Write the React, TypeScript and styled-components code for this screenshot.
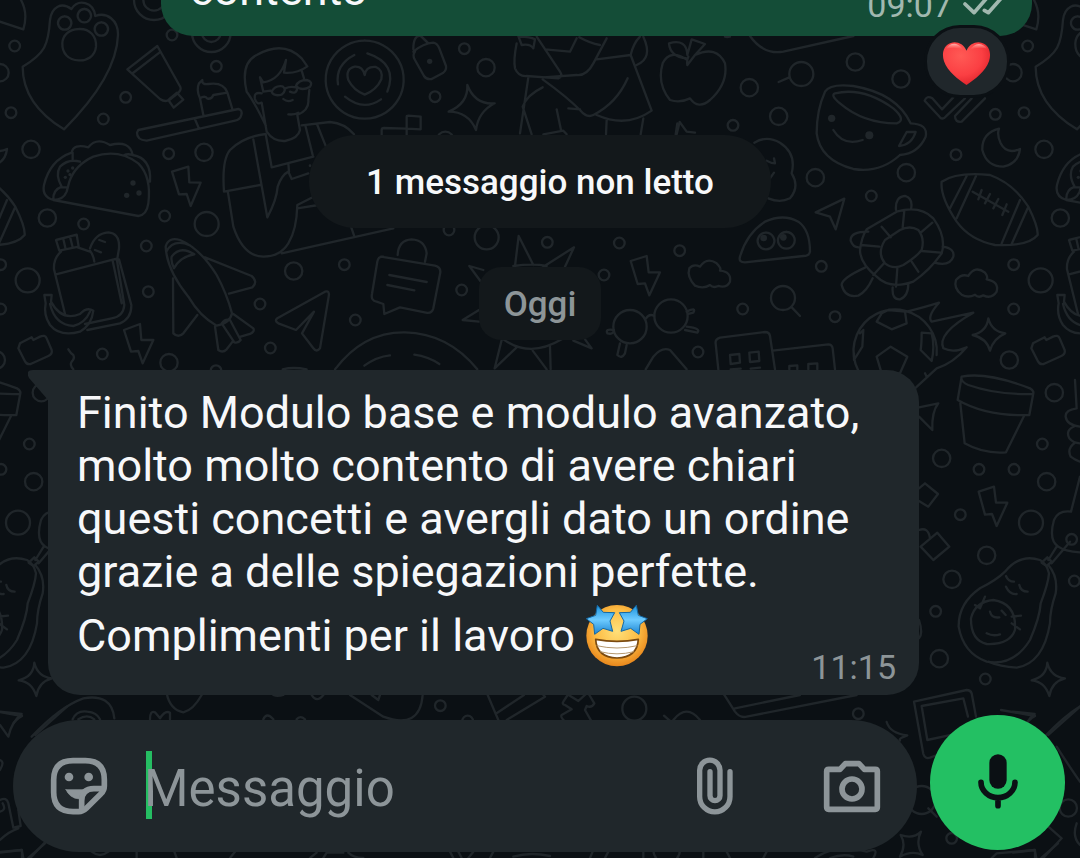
import React from 'react';
import styled, { createGlobalStyle } from 'styled-components';

const GlobalStyle = createGlobalStyle`
  *, *::before, *::after { box-sizing: border-box; }
  html, body, #root { height: 100%; }
  body {
    margin: 0;
    background: #0b1014;
    color: #f7f8fa;
    font-family: Roboto, 'Noto Sans', sans-serif;
    overflow: hidden;
  }
`;

const Screen = styled.main`
  position: relative;
  display: flex;
  flex-direction: column;
  height: 100vh;
  overflow: hidden;
`;

const Wallpaper = styled.svg`
  position: absolute;
  inset: 0;
  width: 100%;
  height: 100%;
  fill: none;
  stroke: #20262a;
  stroke-width: 7;
  stroke-linecap: round;
  stroke-linejoin: round;
`;

const Conversation = styled.section`
  position: relative;
  flex: 1;
  min-height: 0;
  display: flex;
  flex-direction: column;
  justify-content: flex-end;
  overflow: hidden;
  padding-bottom: 25px;
`;

const Bubble = styled.article<{ $own?: boolean }>`
  position: relative;
  flex: none;
  display: flex;
  flex-direction: column;
  margin: ${(p) => (p.$own ? '0 48px 0 161px' : '0 161px 0 48px')};
  padding: ${(p) => (p.$own ? '16px 28px 16px 29px' : '16px 23px 11px 29px')};
  border-radius: ${(p) => (p.$own ? '32px' : '0 32px 32px 32px')};
  background: ${(p) => (p.$own ? '#144d37' : '#20272b')};
`;

const Tail = styled.svg`
  position: absolute;
  top: 0;
  left: -20px;
  width: 20px;
  height: 32px;
  fill: #20272b;
`;

const Text = styled.p`
  margin: 0;
  font-size: 45px;
  line-height: 53px;
`;

const LastRow = styled.div`
  display: flex;
  justify-content: space-between;
  align-items: flex-end;
`;

const LastLine = styled(Text)<{ $own?: boolean }>`
  display: flex;
  align-items: center;
  gap: 10px;
  height: ${(p) => (p.$own ? '53px' : '74px')};
  margin-bottom: ${(p) => (p.$own ? '4px' : '12px')};
`;

const Time = styled.time<{ $own?: boolean }>`
  display: flex;
  align-items: center;
  gap: 11px;
  font-size: 34px;
  line-height: ${(p) => (p.$own ? '30px' : '34px')};
  color: ${(p) => (p.$own ? '#a1b8af' : '#8d9598')};
`;

const Ticks = styled.svg`
  width: 41px;
  height: 24px;
  fill: none;
  stroke: #a1b8af;
  stroke-width: 11;
  stroke-linecap: round;
  stroke-linejoin: round;
`;

const Emoji = styled.svg<{ $w: number; $h: number }>`
  flex: none;
  width: ${(p) => p.$w}px;
  height: ${(p) => p.$h}px;
`;

const Reaction = styled.button`
  position: absolute;
  right: 22px;
  bottom: -62px;
  display: flex;
  align-items: center;
  justify-content: center;
  width: 86px;
  height: 73px;
  padding: 4px 2px 0 0;
  border: 3px solid #0b1014;
  border-radius: 36px;
  background: #20272b;
`;

const UnreadChip = styled.h2`
  align-self: center;
  flex: none;
  margin: 99px 0 0;
  padding: 3px 57px 0;
  border-radius: 47px;
  background: #13181b;
  font-size: 35px;
  font-weight: 500;
  line-height: 90px;
`;

const DayChip = styled.h3`
  align-self: center;
  flex: none;
  margin: 39px 0 30px;
  padding: 3px 25px 0;
  border-radius: 22px;
  background: #13181b;
  color: #8d9598;
  font-size: 35px;
  font-weight: 500;
  line-height: 70px;
`;

const Footer = styled.form`
  position: relative;
  flex: none;
  display: flex;
  align-items: flex-start;
  gap: 13px;
  padding: 0 15px 6px 13px;
  margin-top: -5px;
`;

const Composer = styled.div`
  flex: 1;
  min-width: 0;
  display: flex;
  align-items: center;
  height: 132px;
  margin-top: 5px;
  padding: 0 36px 0 37px;
  border-radius: 66px;
  background: #20272b;
`;

const IconButton = styled.button`
  flex: none;
  width: 58px;
  height: 58px;
  padding: 0;
  border: 0;
  background: none;
  color: #8d9599;
  & + & { margin-left: 79px; }
`;

const Icon = styled.svg`
  display: block;
  width: 58px;
  height: 58px;
  fill: none;
  stroke: currentColor;
  stroke-linecap: round;
  stroke-linejoin: round;
`;

const Field = styled.label`
  position: relative;
  flex: 1;
  min-width: 0;
  display: flex;
  align-items: center;
  margin: 0 19px 2px 38px;
  height: 68px;
  border-left: 6px solid #25bd62;
`;

const Input = styled.input`
  position: relative;
  width: 100%;
  height: 68px;
  margin-left: -8px;
  padding: 6px 0 0;
  border: 0;
  outline: 0;
  background: none;
  color: #f7f8fa;
  font: 400 51px/62px Roboto, 'Noto Sans', sans-serif;
  &::placeholder { color: #8d9599; opacity: 1; }
`;

const MicButton = styled.button`
  flex: none;
  display: flex;
  align-items: center;
  justify-content: center;
  width: 135px;
  height: 135px;
  padding: 0;
  border: 0;
  border-radius: 50%;
  background: #23c063;
  color: #0b1014;
`;

const TILE = 3039;

/* Ring positions of the doodle tile: x, y, radius, in thirds of a pixel. */
const rings: Array<[number, number, number]> = [
  [44, 138, 16], [0, 218, 26], [33, 338, 16], [93, 448, 26], [377, 292, 16], [310, 357, 16],
  [516, 105, 16], [649, 199, 16], [506, 461, 16], [612, 457, 26], [142, 654, 26], [251, 672, 16],
  [494, 648, 16], [620, 672, 36], [439, 738, 16], [83, 841, 36], [445, 875, 16], [881, 813, 26],
  [1033, 794, 16], [780, 912, 16], [1066, 960, 16], [811, 1044, 16], [307, 1062, 16], [507, 1088, 26],
  [2, 794, 16], [2, 927, 16], [462, 0, 60], [462, 0, 32], [634, 98, 58], [634, 98, 28], [648, 1112, 16],
  [1393, 146, 16], [1458, 203, 26], [1305, 290, 16], [1347, 690, 16], [1460, 712, 36], [1642, 727, 16],
  [1858, 729, 16], [1812, 825, 16], [1385, 870, 16], [1336, 421, 26], [1890, 980, 50], [2013, 948, 50],
  [2039, 752, 16], [2248, 263, 26], [2336, 349, 26], [2404, 222, 36], [2566, 186, 26], [2703, 237, 26],
  [2199, 376, 16], [2446, 533, 26], [2719, 518, 26], [2614, 588, 16], [2868, 464, 16], [2986, 343, 16],
  [2464, 799, 16], [2228, 927, 16], [2505, 950, 16], [2349, 894, 36], [2094, 1056, 16],
  [3028, 1080, 26],
  [2825, 1375, 26], [3163, 1178, 26], [2937, 1408, 16], [3042, 1408, 16], [3127, 1332, 16], [3140, 1445, 26],
  [2881, 1544, 16], [3093, 1568, 36], [2960, 1666, 26], [2856, 1738, 26], [3223, 1743, 16],
  [2807, 1834, 16], [2818, 1976, 26], [2956, 2037, 16], [2575, 2141, 16], [2855, 2515, 16], [3205, 2424, 26],
  [2765, 2400, 42], [2000, 2550, 40], [3215, 1618, 16],
  [1321, 2117, 16], [1403, 2163, 16], [1903, 2126, 36],
];

const strokes = [
  /* paw */
  'M68 200 C135 160 145 135 150 60 C155 20 185 5 214 27 C235 -5 280 5 286 48 C320 35 355 60 354 105 C350 220 250 330 192 388 C130 350 68 290 68 200Z',
  'M236 87 C270 85 290 110 288 140 C285 170 260 183 236 181 C205 180 186 160 187 130 C188 105 208 88 236 87Z',
  'M194 49a20 20 0 1 0 .1 0M253 27a20 20 0 1 0 .1 0M304 67a20 20 0 1 0 .1 0',
  'M63 0 Q85 40 70 88 L0 65',
  /* paint tube */
  'M382 208 L472 138 L541 261 Q545 270 533 280 L508 300 Q495 307 480 297Z M399 219 L482 155 M505 300 L531 278 L550 299 L521 323Z',
  /* cake on tray */
  'M415 390 L715 327 Q728 330 724 345 Q720 360 705 362 L440 422 Q410 420 411 398Z M585 358 L597 386 M610 345 L600 295 Q588 270 597 250 L607 240 Q605 255 625 252 Q670 245 682 277 L697 327 M600 295 Q615 285 622 296 Q635 298 640 285 L682 278',
  /* man */
  'M798 378 Q760 300 740 275 Q720 190 770 165 Q850 120 905 175 L922 199 Q890 222 852 218 L858 180 Q840 240 790 247 L780 232 L790 275 M785 280 Q760 275 765 297 Q770 315 785 308 L800 395 Q820 425 855 423 Q895 415 900 390 L892 345 Q928 330 925 300 L928 270 M865 343 Q885 345 895 338 M850 297 Q862 308 878 300 M815 275 Q825 255 848 259 Q862 270 845 284 Q820 290 815 275Z M888 258 Q895 240 920 240 Q940 245 930 260 Q905 275 888 258Z M856 265 Q870 258 888 262 M790 275 L812 272 M870 275 Q890 285 892 262 M905 212 L912 235',
  'M797 402 Q730 410 690 450 Q665 480 672 575 L780 555 M684 578 L700 680 Q730 770 790 770 Q840 770 865 730 Q890 690 892 615 L1000 560 M760 418 L802 652 Q830 600 833 560 Q845 525 865 515 L875 537 L925 520 M797 402 L815 502 L940 470 M865 490 L867 515 M917 380 L938 465 M905 376 L990 366 Q1035 370 1062 403 M952 375 L978 440 M845 760 L1180 685 M1053 680 L1062 706 M892 625 L955 615',
  /* heart medal */
  'M1094 122a117 117 0 1 0 .1 0 M1063 165 Q1005 195 1014 253 M1102 160 Q1195 190 1162 275 M1035 290 Q1090 335 1143 298 M1094 225 Q1088 198 1064 200 Q1035 207 1045 240 Q1060 270 1094 284 Q1130 270 1144 238 Q1150 210 1128 201 Q1098 198 1094 225Z',
  /* taco */
  'M160 600 Q125 590 132 555 Q150 480 215 458 Q220 430 265 442 Q290 410 330 435 Q390 420 398 465 Q455 475 450 545 M160 600 L415 648 Q440 645 445 610 Q455 530 415 490 Q355 445 280 470 Q225 495 208 545 L200 575 Q190 600 160 600Z M160 600 Q158 570 185 560 Q165 525 180 500 Q205 475 240 485 M372 466 Q382 460 398 465 M218 458 V478 M185 562 L203 562',
  /* lightning */
  'M516 515 L565 500 L568 547 L602 548 L572 618 L560 582 L537 583Z',
  'M372 990 L420 972 L424 1020 L460 1020 L428 1090 L415 1053 L393 1055Z',
  'M1892 783 L1940 768 L1946 817 L1980 817 L1948 886 L1935 850 L1913 852Z',
  'M2936 1475 L2982 1460 L2988 1508 L3022 1508 L2990 1578 L2976 1542 L2955 1544Z',
  /* lunch bag */
  'M168 720 L230 704 L236 740 L178 752Z M190 717 L197 748 M210 710 L218 742 M183 755 Q160 775 162 808 L195 942 M168 823 L350 776 L373 915 Q370 950 335 955 L255 972 M270 745 Q285 700 325 697 Q360 700 357 745 L352 776 M270 752 Q280 765 283 785 M233 742 L270 755 M298 720 L315 726 M285 750 L303 757 M357 778 L394 915 Q395 955 360 970 L262 990 M338 782 L365 910',
  'M133 885 H155 L153 905 Q185 965 240 942 Q260 920 280 932 Q275 975 240 995 Q180 1012 150 975 Q130 945 137 910Z M150 912 Q165 975 220 978 Q255 970 270 935',
  /* rocket */
  'M497 740 Q505 710 540 720 Q600 745 650 825 Q680 880 696 940 Q690 970 650 977 Q600 950 565 890 Q500 810 497 740Z M515 770 Q540 735 583 763 Q540 770 522 805 Q512 785 515 770Z M499 755 Q520 715 570 736 M615 772 L755 828 Q775 845 757 862 L687 881 M519 835 L520 1000 Q535 1015 550 1000 L592 945 M645 980 L655 1050 Q668 1060 680 1048 L700 1022 M700 942 L760 985 Q765 995 750 1002 L722 1010 M665 970 L703 1027 Q715 1030 722 1020 L690 960 Q675 955 665 970Z',
  /* paper plane */
  'M832 955 L975 875 Q990 870 986 890 L960 1045 Q950 1058 940 1045 L906 1000 L942 935 L888 990 L835 970 Q822 962 832 955Z',
  /* brick */
  'M60 1030 L95 1012 L100 1020 L120 1010 Q135 1003 140 1015 L155 1050 Q158 1062 145 1068 L92 1092 Q80 1095 74 1082 L55 1045Z',
  'M205 1048 Q212 1060 220 1065 Q225 1075 215 1085 Q208 1095 220 1108',
  /* padlock */
  'M1240 155 Q1270 130 1300 128 Q1312 130 1318 145 L1338 198 Q1340 210 1330 218 L1295 237 Q1280 240 1272 228 L1245 180 Q1236 165 1245 155Z M1240 148 Q1240 105 1262 108 Q1270 115 1285 130',
  /* sparkles */
  'M1402 255 Q1425 315 1484 310 Q1435 335 1428 390 Q1405 335 1346 335 Q1405 310 1402 255Z',
  'M2965 955 Q2975 995 3016 1000 Q2980 1015 2970 1052 Q2960 1015 2918 1005 Q2960 995 2965 955Z',
  'M3142 1988 Q3152 2030 3195 2035 Q3155 2045 3148 2088 Q3135 2045 3095 2041 Q3140 2030 3142 1988Z',
  'M2702 2505 Q2740 2518 2763 2495 Q2745 2530 2768 2565 Q2735 2550 2700 2570 Q2720 2535 2702 2505Z',
  'M2660 2166 Q2670 2200 2722 2206 Q2695 2215 2700 2222',
  /* notes */
  'M1145 405 V390 Q1145 384 1152 384 L1218 386 M1220 405 V350 Q1220 347 1225 347 L1262 350 V388 L1222 386',
  /* walker */
  'M1555 108 L1565 135 Q1590 130 1600 145 L1605 118 Q1590 110 1560 110 M1550 130 Q1540 180 1545 205 Q1555 230 1580 228 L1675 235 Q1690 230 1680 215 L1610 110 M1635 148 L1710 155 L1730 115 M1738 112 Q1770 130 1800 135 M1820 115 L1780 190 Q1760 228 1730 225 L1630 232 M1628 238 Q1700 290 1740 330 Q1760 355 1780 345 Q1850 310 1883 235 M1790 178 L1892 165 L1955 332 Q1880 385 1790 345 M1892 165 Q1900 130 1920 110 M1910 195 Q1960 175 1930 110 M1585 232 L1560 400 M1628 262 Q1580 285 1568 320 L1595 403 M1705 325 L1740 328 M1670 328 L1683 390 M1820 360 L1818 403 M1930 355 L1922 403 M1630 403 L1690 392 L1700 403 M2027 403 L2032 370',
  /* message card */
  'M1143 770 L1305 797 Q1325 802 1320 822 L1300 925 Q1295 942 1278 938 L1200 922 L1153 942 L1150 912 L1130 905 Q1112 902 1116 882 L1132 785 Q1135 768 1150 770Z M1193 765 Q1195 720 1235 718 Q1275 720 1280 760 L1275 785 M1168 825 L1280 846 M1162 855 L1243 871',
  /* sun */
  'M1545 798 L1556 708 L1600 795 M1695 800 L1722 742 L1630 800 M1450 855 L1408 798 L1450 810 M1437 930 L1388 960 L1437 965 M1505 1020 L1484 1105 L1550 1042 M1598 1052 L1640 1108 M1650 1040 L1652 1108 M1720 1022 L1775 1045 L1755 1018 M1510 1018 Q1590 1075 1685 1018 M1540 798 Q1600 790 1640 798',
  /* plate */
  'M1005 1108 Q1090 995 1215 997 Q1345 1000 1432 1108 M1093 1097 Q1130 1070 1170 1066 M1243 1064 Q1285 1070 1318 1092 M848 1108 Q880 1100 920 1108',
  /* glasses */
  'M1938 955 Q1948 940 1963 948 M1842 990 Q1815 985 1822 1000 Q1840 1005 1842 990 M1860 1030 L1852 1065 Q1865 1078 1875 1060 L1880 1035 M2060 935 Q2090 920 2080 938 L2065 942 M2060 980 Q2105 985 2092 998 L2055 990 M1937 1108 L1960 1070 Q1985 1040 2010 1050 L2060 1108',
  /* apple */
  'M2062 180 Q2010 145 1988 190 Q1970 250 2010 300 Q2040 310 2070 295 Q2095 330 2130 300 Q2185 250 2175 190 Q2150 135 2085 165 L2062 195 Q2060 180 2065 170 M2060 175 Q2010 170 2007 130 Q2060 115 2062 165 L2075 118 L2115 132 L2085 165 M2250 108 Q2290 165 2350 155 L2560 108',
  'M2030 403 L2039 366 L2060 395 L2085 398 M2175 110 Q2180 112 2190 110 M2336 246 L2368 232',
  /* coffee cup */
  'M2475 275 Q2490 250 2560 258 Q2690 280 2732 370 M2475 275 Q2450 330 2450 400 Q2460 480 2560 507 Q2640 520 2700 465 M2505 280 Q2590 260 2680 325 Q2720 360 2690 370 Q2590 370 2520 310 Q2490 285 2505 280Z M2732 370 Q2785 372 2777 410 Q2755 460 2700 465 M2720 396 H2747 Q2735 435 2697 438Z M2500 390 Q2530 440 2588 420',
  /* double tick */
  'M2860 292 L2826 328 L2797 295 Q2780 285 2774 302 L2820 352 Q2828 360 2837 350 L2895 295 M2915 295 L2865 348 Q2865 368 2885 365 L2955 295',
  /* brain */
  'M2263 428 Q2300 405 2340 428 Q2390 460 2375 520 Q2400 560 2370 595 Q2340 610 2305 595 M2300 482 Q2315 490 2325 490 L2322 475 M2310 535 L2322 518',
  /* small plane */
  'M2447 637 L2533 596 L2507 688 L2490 650Z',
  /* eyes */
  'M2220 770 Q2240 700 2295 665 Q2350 640 2395 665 Q2430 690 2430 755 Q2428 768 2410 768 L2235 787 Q2215 787 2220 770Z M2298 698a25 25 0 1 0 .1 0 M2359 696a25 25 0 1 0 .1 0',
  /* clouds */
  'M2085 857 Q2060 830 2068 805 Q2080 790 2100 800 Q2120 770 2150 790 Q2165 805 2160 812 Q2195 815 2190 845 Q2180 865 2155 858 Q2140 865 2130 855 Q2110 868 2085 857Z',
  'M2885 884 Q2860 865 2868 840 Q2885 820 2905 828 Q2925 795 2955 818 Q2965 830 2960 838 Q2998 845 2990 875 Q2975 898 2950 886 Q2935 895 2925 884 Q2905 895 2885 884Z',
  'M2376 923 L2400 948',
  /* turtle */
  'M2600 688 L2690 635 Q2760 615 2800 655 Q2840 710 2825 760 Q2790 810 2740 845 Q2670 870 2630 830 Q2580 790 2580 750 Q2585 710 2600 688Z M2655 720 L2700 690 Q2730 675 2755 690 Q2775 715 2765 750 Q2750 770 2710 795 Q2680 810 2655 790 Q2630 760 2655 720Z M2688 630 Q2685 590 2715 588 Q2740 595 2733 628 M2605 695 Q2550 695 2552 722 Q2560 745 2580 742 M2595 803 Q2525 835 2525 855 Q2535 895 2575 887 Q2600 875 2618 835 M2678 862 Q2675 900 2700 898 Q2725 890 2725 850 M2828 740 Q2865 745 2860 770 Q2850 800 2803 788 M2713 632 L2708 682 M2645 680 L2672 712 M2583 735 L2638 740 M2620 825 L2652 790 M2688 860 L2692 805 M2755 815 L2735 785 M2822 758 L2765 753 M2797 668 L2763 697',
  /* football */
  'M2825 545 Q2870 515 2970 525 Q3040 550 3085 620 Q3115 680 3113 705 Q3085 740 2985 735 Q2910 720 2870 665 Q2820 590 2825 545Z M2900 528 L2850 625 M2928 528 L2870 655 M3060 600 L3005 730 M3083 625 L3035 732 M2918 575 L3025 635 M2945 570 L2935 598 M2970 582 L2955 610 M2995 597 L2980 625 M3020 613 L3007 645',
  /* moon */
  'M2997 386 Q2945 400 2947 450 Q2960 500 3010 500 Q3055 490 3060 447 Q3020 465 3002 430 Q2990 405 2997 386Z',
  /* soccer ball */
  'M2810 1065 A125 125 0 1 0 2620 1160 M2630 965 L2675 988 L2720 970 L2715 935 L2665 930 L2645 940Z M2562 1060 V1080 L2587 1040 L2590 990 L2580 1000 M2765 998 Q2765 1030 2762 1050 L2795 1083 Q2805 1040 2795 1000Z M2672 1040 L2722 1070 L2700 1120 H2645 L2630 1070Z M2720 935 Q2780 920 2817 908 Q2780 950 2795 965 Q2840 955 2920 938 Q2810 1000 2830 1045 Q2860 1060 2900 1042 Q2860 1090 2810 1105 L2745 1165 M2775 1120 L2780 1130',
  /* buildings */
  'M2155 1108 L2147 1030 Q2145 1018 2160 1013 L2295 996 Q2308 996 2310 1008 L2325 1108 M2318 1052 L2485 1033 Q2496 1033 2498 1045 L2505 1108 M2190 1065 L2218 1062 L2220 1088 L2192 1092Z M2248 1058 L2276 1055 L2278 1083 L2250 1086Z M2192 1108 L2222 1106 M2252 1106 L2280 1103 M2368 1108 V1098 L2392 1096 V1108 M2425 1108 V1092 L2452 1090 V1108',
  /* flower pot */
  'M2885 1130 Q2960 1115 3090 1165 Q3105 1175 3098 1182 Q2990 1185 2905 1155 Q2880 1145 2885 1130 L2873 1200 Q2960 1250 3088 1245 L3100 1180 M2881 1210 L2894 1330 Q2950 1362 3018 1357 L3072 1248',
  /* arrow */
  'M2757 1222 L2815 1210 Q2795 1235 2797 1290 L2757 1250',
  /* cubes */
  'M2757 1465 L2775 1450 L2814 1482 L2785 1520 L2757 1503 M2762 1640 L2812 1598 L2848 1640 L2800 1680Z M2757 1590 Q2785 1580 2790 1615',
  'M2757 1860 Q2770 1900 2757 1915',
  /* knitted shape at the seam of the tile */
  'M3225 1140 L3230 1225 Q3195 1230 3197 1250 Q3200 1275 3240 1280 M3225 1278 Q3195 1290 3208 1315 Q3220 1330 3240 1330 M3225 1328 Q3200 1345 3212 1370 Q3225 1380 3240 1385 M3240 1430 L3213 1535 Q3175 1530 3162 1560 Q3145 1620 3175 1640 Q3195 1655 3250 1658 M3170 1640 L3145 1680 M3155 1690 L3210 1625 M3125 1688 L3142 1672 L3155 1685 L3140 1698Z',
  /* avocado */
  'M3120 1680 Q3060 1660 3015 1715 Q2990 1740 2940 1765 Q2875 1810 2876 1880 Q2890 1960 2960 1985 Q3040 2000 3090 1920 Q3120 1850 3122 1810 Q3145 1750 3147 1720 Q3140 1690 3120 1680Z M3145 1695 Q3175 1730 3167 1780 Q3150 1830 3150 1870 Q3130 1990 3050 2003 Q3000 2000 2965 1985 M2980 1800 Q2925 1805 2913 1855 Q2912 1920 2960 1932 Q3030 1935 3045 1890 Q3050 1810 2980 1800Z M2925 1815 L2940 1825 L2955 1790 M3035 1850 L3063 1847 M3035 1870 L3060 1888 M3018 1728 Q3025 1745 3042 1745 M3058 1755 Q3062 1775 3083 1775 M3018 1760 Q3030 1785 3050 1782 M2970 1835 Q2975 1855 2998 1852 M2960 1900 Q2980 1910 3000 1903 M3005 1832 L3017 1845',
  /* picture frame */
  'M2742 2105 L2900 2070 Q2912 2070 2915 2080 L2928 2150 M2742 2105 L2770 2262 Q2775 2278 2790 2273 L2820 2262 M2765 2118 L2890 2095 L2904 2150 M2765 2118 L2782 2220 L2860 2203',
  /* laptop edge */
  'M2170 2080 L2205 2135 Q2220 2155 2240 2150 L2570 2085 M2205 2125 L2400 2085 M1992 2147 L2010 2163 M2020 2160 Q2060 2110 2100 2160',
  'M3003 2130 L3105 2148 Q3085 2160 3080 2170 M3145 2205 L3240 2120 M3170 2240 Q3215 2310 3240 2345 M2785 2425 L2810 2450 M3145 2480 L3185 2515 L3130 2574 M2975 2574 L2990 2560 L3105 2550 V2574 M3230 2470 Q3215 2510 3240 2535',
  /* lower left */
  'M0 2135 L65 2142 Q35 2165 25 2210 L0 2175 M95 2210 Q180 2120 250 2095 Q335 2080 343 2155 M218 2158 Q230 2130 262 2135 Q290 2137 300 2158 M235 2158 Q262 2140 283 2158 M500 2080 Q510 2130 550 2137 Q580 2130 605 2085 M450 2158 Q450 2130 465 2137 L480 2155 Q495 2130 510 2138 V2158 M790 2158 Q800 2135 820 2158 M890 2158 Q900 2145 915 2158 M1050 2085 L1150 2150 Q1260 2190 1268 2085 M935 2085 Q950 2110 970 2085 M820 2085 Q832 2090 850 2085 M1115 2085 L1135 2100 L1140 2085',
  'M0 2280 Q15 2285 0 2310 M0 2400 Q20 2390 25 2410 L40 2483 L62 2478 L55 2430 M0 2435 Q20 2430 8 2410 M0 2520 Q25 2495 55 2485 M0 2558 L65 2550 L70 2574 M85 2574 L135 2530 M275 2555 Q300 2575 325 2555 M410 2555 V2574 M523 2555 L530 2574 M705 2555 L690 2574 M930 2574 L950 2558 M970 2574 L980 2558 H1030 M1045 2558 Q1060 2574 1090 2574',
  /* pencil and cross */
  'M1463 2085 L1495 2160 M1492 2138 L1572 2085 M1520 2160 L1635 2090 L1628 2082 M1705 2082 L1690 2105 Q1685 2112 1695 2115 L1715 2128 L1685 2145 Q1680 2150 1695 2165 M1695 2078 L1735 2103 L1760 2080 M1768 2085 L1783 2110 Q1775 2125 1760 2118 L1755 2130 L1775 2165',
  'M1350 2555 L1360 2574 M1375 2555 L1385 2574 M1420 2555 L1405 2574 M1480 2555 L1470 2574 M1540 2570 Q1590 2555 1650 2568 M1778 2555 L1770 2574 M1825 2555 L1815 2574 M1930 2555 V2574 M2110 2555 V2574 M2180 2555 L2190 2574 M2300 2555 L2290 2574 M2445 2574 Q2510 2530 2600 2555 Q2640 2540 2620 2574 M2490 2574 Q2530 2560 2560 2570',
];

const dots: Array<[number, number, number]> = [
  [399, 549, 8], [380, 586, 8], [417, 579, 8], [204, 513, 5], [218, 504, 5], [196, 532, 5], [210, 524, 5],
  [1289, 184, 8], [930, 497, 4], [2495, 355, 11], [2608, 406, 12], [2291, 714, 10], [2350, 712, 10],
];

const Doodles = () => (
  <Wallpaper aria-hidden="true">
    <defs>
      <g id="doodles">
        {rings.map(([x, y, r]) => <circle key={`${x}-${y}-${r}`} cx={x} cy={y} r={r} />)}
        {strokes.map((d) => <path key={d} d={d} />)}
        {dots.map(([x, y, r]) => <circle key={`${x}-${y}`} cx={x} cy={y} r={r} fill="#20262a" stroke="none" />)}
      </g>
    </defs>
    <g transform="scale(.33333)">
      <use href="#doodles" x={-TILE} />
      <use href="#doodles" />
      <use href="#doodles" x={TILE} />
    </g>
  </Wallpaper>
);

const Heart = () => (
  <Emoji $w={49} $h={45} viewBox="0 0 150 138" role="img" aria-label="Cuore rosso">
    <defs>
      <radialGradient id="heartFill" cx=".38" cy=".32" r=".75">
        <stop offset="0" stopColor="#ff5a55" />
        <stop offset=".6" stopColor="#fb3f43" />
        <stop offset="1" stopColor="#dc2028" />
      </radialGradient>
      <linearGradient id="heartShine" x1="0" y1="0" x2="0" y2="1">
        <stop offset="0" stopColor="#ffb9b4" />
        <stop offset="1" stopColor="#ff5a55" stopOpacity="0" />
      </linearGradient>
    </defs>
    <path d="M75 30 C66 7 43 0 27 6 C5 13 -2 38 6 62 C17 94 49 117 75 135 C101 117 133 94 144 62 C152 38 145 13 123 6 C107 0 84 7 75 30Z" fill="url(#heartFill)" />
    <path d="M12 24 Q24 6 43 9 Q58 13 65 28 Q45 16 12 24Z M85 28 Q96 10 113 9 Q130 10 138 24 Q110 16 85 28Z" fill="url(#heartShine)" />
  </Emoji>
);

const StarStruck = () => (
  <Emoji $w={65} $h={64} viewBox="75 40 195 192" role="img" aria-label="Faccina con stelle negli occhi">
    <defs>
      <radialGradient id="face" cx=".5" cy=".42" r=".58">
        <stop offset="0" stopColor="#ffe07a" />
        <stop offset=".6" stopColor="#fdbd45" />
        <stop offset="1" stopColor="#e8871c" />
      </radialGradient>
      <linearGradient id="star" x1="0" y1="0" x2="0" y2="1">
        <stop offset="0" stopColor="#1b93dd" />
        <stop offset=".5" stopColor="#6ecbff" />
        <stop offset="1" stopColor="#1b84d2" />
      </linearGradient>
    </defs>
    <circle cx="171" cy="138" r="92" fill="url(#face)" />
    <path d="M107 149 Q171 161 235 149 Q232 203 171 205 Q110 203 107 149Z" fill="#fff" stroke="#7b4a10" strokeWidth="5" strokeLinejoin="round" />
    <path d="M110 168 Q171 182 232 168 M120 186 Q171 199 222 186" fill="none" stroke="#b79a71" strokeWidth="3" />
    <g fill="url(#star)" stroke="#1468a5" strokeWidth="3" strokeLinejoin="round">
      <path d="M112 47 L130 68 L164 69 L150 94 L158 125 L129 116 L104 134 L101 104 L79 87 L107 77Z" />
      <path d="M229 47 L211 68 L178 69 L192 94 L183 125 L212 116 L237 134 L240 104 L262 87 L235 77Z" />
    </g>
  </Emoji>
);

export default function App() {
  return (
    <Screen>
      <GlobalStyle />
      <Doodles />
      <Conversation>
        <Bubble $own>
          <LastRow>
            <LastLine as="div" $own>contento</LastLine>
            <Time $own>
              09:07
              <Ticks viewBox="905 -12 123 72" role="img" aria-label="Consegnato">
                <path d="M911 21 L938 47 L988 -10 M969 40 L981 47 L1021 2" />
              </Ticks>
            </Time>
          </LastRow>
          <Reaction type="button" aria-label="Reazione"><Heart /></Reaction>
        </Bubble>
        <UnreadChip>1 messaggio non letto</UnreadChip>
        <DayChip>Oggi</DayChip>
        <Bubble>
          <Tail viewBox="0 0 20 32" aria-hidden="true">
            <path d="M20 0 H5 Q-3 0 1 8 L20 30Z" />
          </Tail>
          <Text>
            Finito Modulo base e modulo avanzato, molto molto contento di avere chiari questi concetti e
            avergli dato un ordine grazie a delle spiegazioni perfette.
          </Text>
          <LastRow>
            <LastLine as="div">Complimenti per il lavoro <StarStruck /></LastLine>
            <Time>11:15</Time>
          </LastRow>
        </Bubble>
      </Conversation>
      <Footer onSubmit={(e) => e.preventDefault()}>
        <Composer>
          <IconButton type="button" aria-label="Adesivi">
            <Icon viewBox="150 230 174 174" strokeWidth="17">
              <path d="M219 241 H256 Q313 241 313 298 V317 Q313 331 303 340 L259 384 Q249 394 236 394 H219 Q161 394 161 336 V299 Q161 241 219 241Z" />
              <path d="M245 390 V362 Q245 325 282 325 H310" strokeLinecap="butt" />
              <path d="M198 328 H254 Q238 338 238 356 Q208 353 198 328Z" fill="currentColor" strokeWidth="2" />
              <circle cx="207" cy="290" r="13" fill="currentColor" stroke="none" />
              <circle cx="266" cy="290" r="13" fill="currentColor" stroke="none" />
            </Icon>
          </IconButton>
          <Field>
            <Input type="text" placeholder="Messaggio" aria-label="Messaggio" />
          </Field>
          <IconButton type="button" aria-label="Allega">
            <Icon viewBox="79 230 174 174" strokeWidth="16">
              <path d="M211 274 V349 A45 45 0 0 1 120 349 V270 A30 30 0 0 1 181 270 V346 A15 15 0 0 1 151 346 V274" />
            </Icon>
          </IconButton>
          <IconButton type="button" aria-label="Fotocamera">
            <Icon viewBox="489 230 174 174" strokeWidth="17">
              <path d="M506 267 H540 L556 250 H597 L613 267 H646 Q652 267 652 273 V381 Q652 387 646 387 H506 Q500 387 500 381 V273 Q500 267 506 267Z" />
              <circle cx="576" cy="326" r="30" />
            </Icon>
          </IconButton>
        </Composer>
        <MicButton type="button" aria-label="Messaggio vocale">
          <Icon viewBox="927 222 174 174" strokeWidth="17">
            <rect x="988" y="223" width="52" height="103" rx="26" fill="currentColor" stroke="none" />
            <path d="M963 307 A51 46 0 0 0 1065 307 M1014 354 V377" />
          </Icon>
        </MicButton>
      </Footer>
    </Screen>
  );
}
